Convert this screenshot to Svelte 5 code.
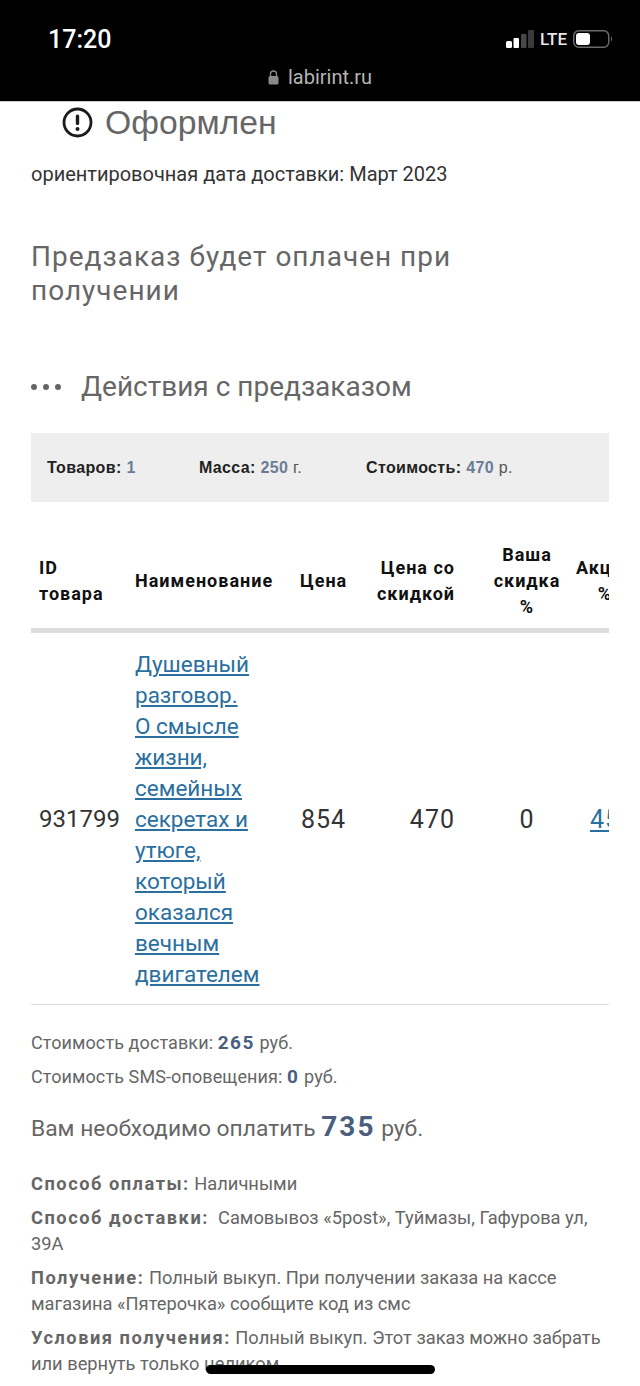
<script lang="ts">
  const headers = [
    { label: 'ID товара', cls: 'left' },
    { label: 'Наименование', cls: 'left' },
    { label: 'Цена', cls: '' },
    { label: 'Цена со скидкой', cls: 'right' },
    { label: 'Ваша скидка %', cls: '' },
    { label: 'Акция %', cls: 'last' }
  ];
</script>

<div class="phone">
  <header class="top">
    <div class="status">
      <span class="time">17:20</span>
      <div class="indicators">
        <svg class="signal" width="28" height="18" viewBox="0 0 28 18">
          <rect x="0" y="11" width="6" height="7" rx="1.500" fill="#fff" />
          <rect x="7.500" y="8" width="5.500" height="10" rx="1" fill="#fff" />
          <rect x="15" y="4" width="5.500" height="14" rx="1" fill="#484848" />
          <rect x="22" y="0" width="6" height="18" rx="1" fill="#3a3a3a" />
        </svg>
        <span class="lte">LTE</span>
        <svg class="battery" width="40" height="18" viewBox="0 0 40 18">
          <rect x="0.750" y="0.750" width="35" height="16.500" rx="5" fill="none" stroke="#6a6a6a" stroke-width="1.500" />
          <rect x="3" y="3" width="14" height="12" rx="3" fill="#fff" />
          <path d="M38 6.500c1.400.4 1.400 4.600 0 5z" fill="#6a6a6a" />
        </svg>
      </div>
    </div>
    <div class="address">
      <svg width="11" height="15" viewBox="0 0 11 15">
        <path d="M2.500 6V4a3 3 0 0 1 6 0v2" fill="none" stroke="#8a8a8a" stroke-width="1.300" />
        <rect x="0.500" y="6" width="10" height="8.500" rx="1.500" fill="#8a8a8a" />
      </svg>
      <span>labirint.ru</span>
    </div>
  </header>

  <main class="page">
    <div class="state">
      <svg width="31" height="31" viewBox="0 0 31 31">
        <circle cx="15.500" cy="15.500" r="13.500" fill="none" stroke="#1c1c1c" stroke-width="2.800" />
        <rect x="13.800" y="7.500" width="3.400" height="10.500" rx="1.500" fill="#1c1c1c" />
        <circle cx="15.500" cy="22" r="2" fill="#1c1c1c" />
      </svg>
      <span>Оформлен</span>
    </div>
    <p class="eta">ориентировочная дата доставки: Март 2023</p>
    <h2 class="note">Предзаказ будет оплачен при получении</h2>

    <div class="actions">
      <span class="dots"><i></i><i></i><i></i></span>
      <span>Действия с предзаказом</span>
    </div>

    <div class="summary">
      <span class="s1"><b>Товаров:</b> <em>1</em></span>
      <span class="s2"><b>Масса:</b> <em>250</em> г.</span>
      <span class="s3"><b>Стоимость:</b> <em>470</em> р.</span>
    </div>

    <div class="table-wrap">
      <table>
        <colgroup>
          <col style="width: 96px" />
          <col style="width: 165px" />
          <col style="width: 63px" />
          <col style="width: 124px" />
          <col style="width: 96px" />
          <col style="width: 60px" />
        </colgroup>
        <thead>
          <tr>
            {#each headers as h}
              <th class={h.cls}>{h.label}</th>
            {/each}
          </tr>
        </thead>
        <tbody>
          <tr>
            <td>931799</td>
            <td class="title"><a href="#book">Душевный разговор. О&nbsp;смысле жизни, семейных секретах и утюге, который оказался вечным двигателем</a></td>
            <td class="num">854</td>
            <td class="num right">470</td>
            <td class="num">0</td>
            <td class="num last"><a href="#promo">45</a></td>
          </tr>
        </tbody>
      </table>
    </div>

    <div class="fees">
      <p>Стоимость доставки: <strong>265</strong> руб.</p>
      <p>Стоимость SMS-оповещения: <strong>0</strong> руб.</p>
    </div>

    <p class="total">Вам необходимо оплатить <strong>735</strong> руб.</p>

    <div class="details">
      <p><b>Способ оплаты:</b> Наличными</p>
      <p><b>Способ доставки:</b>&nbsp; Самовывоз «5post», Туймазы, Гафурова ул, 39А</p>
      <p><b>Получение:</b> Полный выкуп. При получении заказа на кассе магазина «Пятерочка» сообщите код из смс</p>
      <p><b>Условия получения:</b> Полный выкуп. Этот заказ можно забрать или вернуть только целиком</p>
    </div>
  </main>

  <div class="home-bar"></div>
</div>

<style>
  :global(body) {
    margin: 0;
    background: #fff;
  }

  .phone {
    position: relative;
    width: 640px;
    height: 1386px;
    overflow: hidden;
    background: #fff;
    font-family: Roboto, "Noto Sans", sans-serif;
  }

  .top {
    height: 102px;
    box-sizing: border-box;
    background: #000;
    color: #fff;
    border-bottom: 1px solid #ccc;
  }

  .status {
    display: flex;
    align-items: center;
    justify-content: space-between;
    padding: 24px 27px 0 48px;
    height: 30px;
  }

  .time {
    font-size: 25px;
    font-weight: 500;
  }

  .indicators {
    display: flex;
    align-items: center;
    gap: 6px;
  }

  .lte {
    font-size: 17px;
    font-weight: 500;
    color: #e8e8e8;
  }

  .address {
    display: flex;
    align-items: center;
    justify-content: center;
    gap: 9px;
    margin-top: 11px;
    font-size: 20px;
    color: #b5b5b5;
  }

  .page {
    padding: 0 31px;
  }

  .state {
    display: flex;
    align-items: center;
    gap: 12px;
    padding-left: 31px;
    height: 41px;
    font-family: "Liberation Sans", sans-serif;
    font-size: 33.700px;
    color: #666;
  }

  .eta {
    margin: 16px 0 0;
    font-size: 20px;
    line-height: 30px;
    color: #333;
  }

  .note {
    margin: 51px 0 0;
    max-width: 450px;
    font-size: 28px;
    line-height: 34px;
    letter-spacing: 1px;
    font-weight: 400;
    color: #666;
  }

  .actions {
    display: flex;
    align-items: center;
    gap: 20px;
    margin-top: 61px;
    font-size: 28px;
    line-height: 36px;
    color: #666;
  }

  .dots {
    display: flex;
    gap: 6px;
  }

  .dots i {
    width: 6px;
    height: 6px;
    border-radius: 50%;
    background: #666;
  }

  .summary {
    display: flex;
    align-items: center;
    height: 69px;
    margin-top: 28px;
    background: #eee;
    font-family: "Liberation Sans", sans-serif;
    font-size: 16px;
    letter-spacing: 0.350px;
    color: #555;
  }

  .summary b {
    color: #222;
  }

  .summary em {
    font-style: normal;
    font-weight: 700;
    color: #6b7c98;
  }

  .s1 {
    margin-left: 16px;
    width: 152px;
  }

  .s2 {
    width: 167px;
  }

  .table-wrap {
    margin-top: 32px;
    overflow: hidden;
    border-bottom: 1px solid #ddd;
  }

  table {
    table-layout: fixed;
    width: 604px;
    border-collapse: collapse;
  }

  th {
    padding: 8px;
    border-bottom: 5px solid #ddd;
    font-size: 18px;
    line-height: 26px;
    font-weight: 700;
    color: #111;
    letter-spacing: 1px;
    text-align: center;
    vertical-align: middle;
  }

  th.left {
    text-align: left;
  }

  td {
    padding: 16px 8px 14px;
    font-size: 24px;
    line-height: 31px;
    color: #333;
    vertical-align: middle;
  }

  td.title {
    font-size: 22.500px;
  }

  td.num {
    text-align: center;
    font-size: 25px;
    letter-spacing: 1px;
  }

  th.right,
  td.num.right {
    padding-right: 24px;
    text-align: right;
  }

  th.last,
  td.num.last {
    padding-left: 0;
    padding-right: 0;
  }

  a {
    color: #2a6f9f;
    text-decoration: underline;
  }

  .fees {
    margin-top: 21px;
    font-size: 18px;
    letter-spacing: 0.100px;
    line-height: 34px;
    color: #666;
  }

  .fees p {
    margin: 0;
  }

  .fees strong {
    letter-spacing: 1.500px;
    font-size: 19px;
    color: #4a5f80;
  }

  .total {
    margin: 13px 0 0;
    font-size: 22.800px;
    line-height: 40px;
    color: #666;
  }

  .total strong {
    font-size: 28px;
    letter-spacing: 2px;
    color: #4a5f80;
  }

  .details {
    margin-top: 22px;
    font-size: 18.300px;
    line-height: 26px;
    color: #666;
  }

  .details p {
    margin: 0 0 8px;
  }

  .details b {
    letter-spacing: 1.500px;
  }

  .home-bar {
    position: absolute;
    left: 206px;
    top: 1365px;
    width: 229px;
    height: 9px;
    border-radius: 5px;
    background: #000;
  }
</style>
